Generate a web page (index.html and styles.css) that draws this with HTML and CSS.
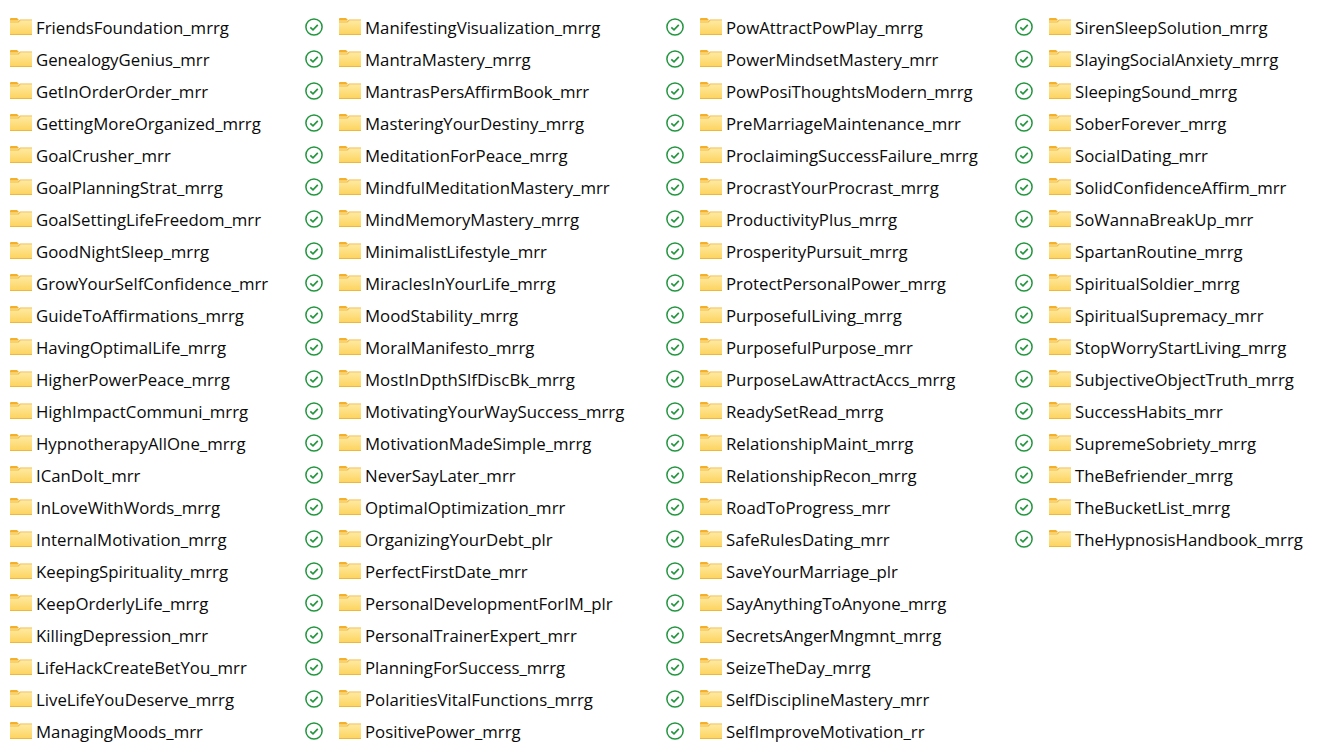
FILE: index.html
```html
<!DOCTYPE html>
<html lang="en">
<head>
    <meta charset="UTF-8">
    <title>Folders</title>
    <link rel="stylesheet" href="styles.css">
</head>
<body>
    <svg class="defs" width="0" height="0">
        <defs>
            <linearGradient id="folder-front" x1="0" y1="0" x2="0" y2="1">
                <stop offset="0" stop-color="#ffeaa3"/>
                <stop offset="1" stop-color="#fcd25a"/>
            </linearGradient>
            <symbol id="folder" viewBox="0 0 22 17">
                <path d="M0 1Q0 0 1 0H7L9 2L7 3.500H0Z" fill="#f4b02a"/>
                <rect x="0" y="2.500" width="22" height="14.500" fill="url(#folder-front)"/>
                <path d="M0 3.500H8L10 1.500H22V2.500H10.500L8.500 4.500H0Z" fill="#f2bb3e"/>
                <rect x="0" y="16" width="22" height="1" fill="#eeb83c"/>
            </symbol>
            <symbol id="check" viewBox="0 0 18 18">
                <circle cx="9" cy="9" r="8.100" fill="none" stroke="#23963f" stroke-width="1.500"/>
                <path d="M5.300 9.300L8 11.800L12.800 6.800" fill="none" stroke="#23963f" stroke-width="1.700"/>
            </symbol>
        </defs>
    </svg>
    <main class="columns" id="columns"></main>
    <script>
        const columns = [
            ['FriendsFoundation_mrrg','GenealogyGenius_mrr','GetInOrderOrder_mrr','GettingMoreOrganized_mrrg','GoalCrusher_mrr','GoalPlanningStrat_mrrg','GoalSettingLifeFreedom_mrr','GoodNightSleep_mrrg','GrowYourSelfConfidence_mrr','GuideToAffirmations_mrrg','HavingOptimalLife_mrrg','HigherPowerPeace_mrrg','HighImpactCommuni_mrrg','HypnotherapyAllOne_mrrg','ICanDoIt_mrr','InLoveWithWords_mrrg','InternalMotivation_mrrg','KeepingSpirituality_mrrg','KeepOrderlyLife_mrrg','KillingDepression_mrr','LifeHackCreateBetYou_mrr','LiveLifeYouDeserve_mrrg','ManagingMoods_mrr'],
            ['ManifestingVisualization_mrrg','MantraMastery_mrrg','MantrasPersAffirmBook_mrr','MasteringYourDestiny_mrrg','MeditationForPeace_mrrg','MindfulMeditationMastery_mrr','MindMemoryMastery_mrrg','MinimalistLifestyle_mrr','MiraclesInYourLife_mrrg','MoodStability_mrrg','MoralManifesto_mrrg','MostInDpthSlfDiscBk_mrrg','MotivatingYourWaySuccess_mrrg','MotivationMadeSimple_mrrg','NeverSayLater_mrr','OptimalOptimization_mrr','OrganizingYourDebt_plr','PerfectFirstDate_mrr','PersonalDevelopmentForIM_plr','PersonalTrainerExpert_mrr','PlanningForSuccess_mrrg','PolaritiesVitalFunctions_mrrg','PositivePower_mrrg'],
            ['PowAttractPowPlay_mrrg','PowerMindsetMastery_mrr','PowPosiThoughtsModern_mrrg','PreMarriageMaintenance_mrr','ProclaimingSuccessFailure_mrrg','ProcrastYourProcrast_mrrg','ProductivityPlus_mrrg','ProsperityPursuit_mrrg','ProtectPersonalPower_mrrg','PurposefulLiving_mrrg','PurposefulPurpose_mrr','PurposeLawAttractAccs_mrrg','ReadySetRead_mrrg','RelationshipMaint_mrrg','RelationshipRecon_mrrg','RoadToProgress_mrr','SafeRulesDating_mrr','SaveYourMarriage_plr','SayAnythingToAnyone_mrrg','SecretsAngerMngmnt_mrrg','SeizeTheDay_mrrg','SelfDisciplineMastery_mrr','SelfImproveMotivation_rr'],
            ['SirenSleepSolution_mrrg','SlayingSocialAnxiety_mrrg','SleepingSound_mrrg','SoberForever_mrrg','SocialDating_mrr','SolidConfidenceAffirm_mrr','SoWannaBreakUp_mrr','SpartanRoutine_mrrg','SpiritualSoldier_mrrg','SpiritualSupremacy_mrr','StopWorryStartLiving_mrrg','SubjectiveObjectTruth_mrrg','SuccessHabits_mrr','SupremeSobriety_mrrg','TheBefriender_mrrg','TheBucketList_mrrg','TheHypnosisHandbook_mrrg']
        ]
        const root = document.getElementById('columns')
        columns.forEach((names, i) => {
            const col = document.createElement('ul')
            col.className = 'column'
            names.forEach(name => {
                const status = i > 0 ? '<svg class="status"><use href="#check"/></svg>' : ''
                const row = document.createElement('li')
                row.className = 'row'
                row.innerHTML = status + '<svg class="folder"><use href="#folder"/></svg><span class="name">' + name + '</span>'
                col.appendChild(row)
            })
            root.appendChild(col)
        })
    </script>
</body>
</html>
```
FILE: styles.css
```css
*{
    margin: 0;
    padding: 0;
    box-sizing: border-box;
}
html, body{
    height: 100%;
}
body{
    background: #fff;
    color: #0a0a0a;
    font-family: "Open Sans", "Noto Sans", sans-serif;
    font-size: 16.8px;
    overflow: hidden;
}
.defs{
    display: block;
    height: 0;
}
.columns{
    display: grid;
    grid-template-columns: 305px 361px 349px 1fr;
    padding-top: 11px;
}
.column{
    list-style: none;
}
.column:first-child{
    padding-left: 10px;
}
.row{
    display: flex;
    align-items: center;
    height: 32px;
    white-space: nowrap;
}
.status{
    width: 18px;
    height: 18px;
    margin-right: 16px;
    flex: none;
}
.folder{
    width: 22px;
    height: 17px;
    margin-right: 4px;
    flex: none;
    position: relative;
    top: -1px;
}
```
